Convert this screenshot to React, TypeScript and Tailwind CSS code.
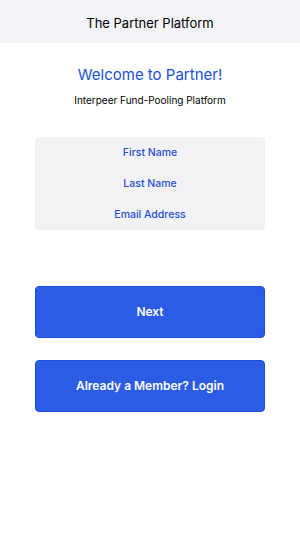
export default function App() {
  const fields = ['First Name', 'Last Name', 'Email Address'];

  return (
    <div
      className="min-h-[533px] w-[300px] bg-white"
      style={{ fontFamily: 'Inter, "Noto Sans", sans-serif' }}
    >
      <div className="flex h-[43px] items-center justify-center bg-[#f4f4f8] pt-[4px]">
        <h1 className="text-[13px] font-normal text-black">The Partner Platform</h1>
      </div>

      <div className="flex flex-col items-center px-[35px]">
        <h2 className="mt-[22px] text-[15px] font-normal leading-[20px] text-[#1a4fd8]">Welcome to Partner!</h2>
        <p className="mt-[8px] text-[10px] leading-[14px] text-black">Interpeer Fund-Pooling Platform</p>

        <div className="mt-[30px] flex w-full flex-col rounded-[4px] bg-[#f2f2f5]">
          {fields.map((f) => (
            <div
              key={f}
              className="flex h-[31px] items-center justify-center text-[10.5px] font-medium text-[#1f4fd6]"
            >
              {f}
            </div>
          ))}
        </div>

        <button className="mt-[56px] flex h-[52px] w-full items-center justify-center rounded-[4px] border border-[#1f4fd6] bg-[#2b5ce3] text-[12px] font-semibold text-white">
          Next
        </button>
        <button className="mt-[22px] flex h-[52px] w-full items-center justify-center rounded-[4px] border border-[#1f4fd6] bg-[#2b5ce3] text-[12px] font-semibold text-white">
          Already a Member? Login
        </button>
      </div>
    </div>
  );
}
